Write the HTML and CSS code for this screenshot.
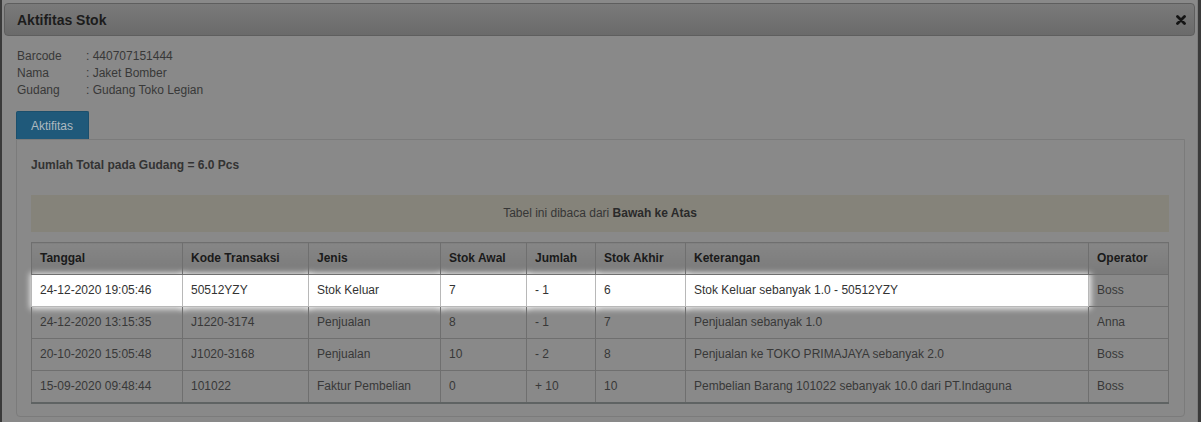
FILE: index.html
```html
<!DOCTYPE html>
<html lang="id">
<head>
    <meta charset="UTF-8">
    <title>Aktifitas Stok</title>
    <link rel="stylesheet" href="styles.css">
</head>
<body>
    <div class="dialog">
        <div class="dialog-title">
            <span>Aktifitas Stok</span>
            <svg class="close-icon" width="10" height="10" viewBox="0 0 10 10">
                <path d="M1.5 1.5 L8.5 8.5 M8.5 1.5 L1.5 8.5" stroke="#141414" stroke-width="2.8" stroke-linecap="round"/>
            </svg>
        </div>
        <div class="dialog-body">
            <div class="info">
                <div class="info-row"><span class="info-label">Barcode</span><span>: 440707151444</span></div>
                <div class="info-row"><span class="info-label">Nama</span><span>: Jaket Bomber</span></div>
                <div class="info-row"><span class="info-label">Gudang</span><span>: Gudang Toko Legian</span></div>
            </div>
            <div class="tabs">
                <div class="tab active">Aktifitas</div>
            </div>
            <div class="tab-panel">
                <div class="total">Jumlah Total pada Gudang = 6.0 Pcs</div>
                <div class="alert">Tabel ini dibaca dari <b>Bawah ke Atas</b></div>
                <table class="stok-table">
                    <colgroup>
                        <col style="width:151px">
                        <col style="width:126px">
                        <col style="width:132px">
                        <col style="width:86px">
                        <col style="width:69px">
                        <col style="width:90px">
                        <col style="width:403px">
                        <col style="width:80px">
                    </colgroup>
                    <thead>
                        <tr>
                            <th>Tanggal</th>
                            <th>Kode Transaksi</th>
                            <th>Jenis</th>
                            <th>Stok Awal</th>
                            <th>Jumlah</th>
                            <th>Stok Akhir</th>
                            <th>Keterangan</th>
                            <th>Operator</th>
                        </tr>
                    </thead>
                    <tbody>
                        <tr class="highlight">
                            <td>24-12-2020 19:05:46</td>
                            <td>50512YZY</td>
                            <td>Stok Keluar</td>
                            <td>7</td>
                            <td>- 1</td>
                            <td>6</td>
                            <td>Stok Keluar sebanyak 1.0 - 50512YZY</td>
                            <td class="plain">Boss</td>
                        </tr>
                        <tr>
                            <td>24-12-2020 13:15:35</td>
                            <td>J1220-3174</td>
                            <td>Penjualan</td>
                            <td>8</td>
                            <td>- 1</td>
                            <td>7</td>
                            <td>Penjualan sebanyak 1.0</td>
                            <td>Anna</td>
                        </tr>
                        <tr>
                            <td>20-10-2020 15:05:48</td>
                            <td>J1020-3168</td>
                            <td>Penjualan</td>
                            <td>10</td>
                            <td>- 2</td>
                            <td>8</td>
                            <td>Penjualan ke TOKO PRIMAJAYA sebanyak 2.0</td>
                            <td>Boss</td>
                        </tr>
                        <tr>
                            <td>15-09-2020 09:48:44</td>
                            <td>101022</td>
                            <td>Faktur Pembelian</td>
                            <td>0</td>
                            <td>+ 10</td>
                            <td>10</td>
                            <td>Pembelian Barang 101022 sebanyak 10.0 dari PT.Indaguna</td>
                            <td>Boss</td>
                        </tr>
                    </tbody>
                </table>
            </div>
        </div>
    </div>
</body>
</html>
```

FILE: styles.css
```css
body {
    margin: 0;
    background: #3a3a3a;
    font-family: "Liberation Sans", Arial, sans-serif;
    font-size: 12px;
    color: #383838;
}
.dialog {
    margin-left: 2px;
    width: 1196px;
    height: 422px;
    background: #898989;
    padding-top: 3px;
    box-sizing: border-box;
    border-right: 1px solid #7c7c7c;
}
.dialog-title {
    margin: 0 2px;
    height: 33px;
    box-sizing: border-box;
    border: 1px solid #5e5e5e;
    border-radius: 4px;
    background: linear-gradient(#7a7a7a, #6a6a6a);
    display: flex;
    align-items: center;
    justify-content: space-between;
    padding: 0 8px 0 12px;
    font-size: 14px;
    font-weight: bold;
    color: #1c1c1c;
}
.close-icon {
    display: block;
}
.dialog-body {
    padding: 12px 12px 0 14px;
}
.info {
    padding-left: 1px;
    line-height: 17px;
}
.info-row {
    display: flex;
}
.info-label {
    width: 69px;
}
.tabs {
    display: flex;
    margin-top: 12px;
}
.tab {
    height: 28px;
    line-height: 28px;
    padding: 0 14px;
    box-sizing: border-box;
    width: 73px;
    color: #aeb9c0;
    background: #1f597a;
    border: 1px solid #1b4f6c;
    border-bottom: none;
    border-radius: 2px 2px 0 0;
}
.tab-panel {
    border: 1px solid #7b7b7b;
    border-radius: 0 0 4px 4px;
    padding: 17px 15px 12px 14px;
    width: 1169px;
    box-sizing: border-box;
}
.total {
    font-weight: bold;
    line-height: 17px;
    color: #333;
}
.alert {
    margin-top: 21px;
    background: #85837a;
    height: 37px;
    line-height: 37px;
    text-align: center;
    color: #363636;
}
.alert b {
    color: #2a2a2a;
}
.stok-table {
    margin-top: 10px;
    border-collapse: collapse;
    table-layout: fixed;
    width: 1137px;
    border: 1px solid #6c6c6c;
    border-bottom: 2px solid #5f6363;
}
.stok-table th,
.stok-table td {
    border: 1px solid #6f6f6f;
    padding: 7px 8px;
    line-height: 17px;
    text-align: left;
    white-space: nowrap;
    overflow: visible;
}
.stok-table th {
    background: linear-gradient(#868686, #7a7a7a);
    color: #1a1a1a;
    font-weight: bold;
    height: 17px;
}
.stok-table tr.highlight td {
    background: #fff;
    color: #333;
    border-color: #b8b8b8;
    box-shadow: 0 0 6px 2px rgba(255, 255, 255, 0.85);
}
.stok-table tr.highlight td.plain {
    background: transparent;
    color: #383838;
    border-color: #6f6f6f;
    box-shadow: none;
}
```
